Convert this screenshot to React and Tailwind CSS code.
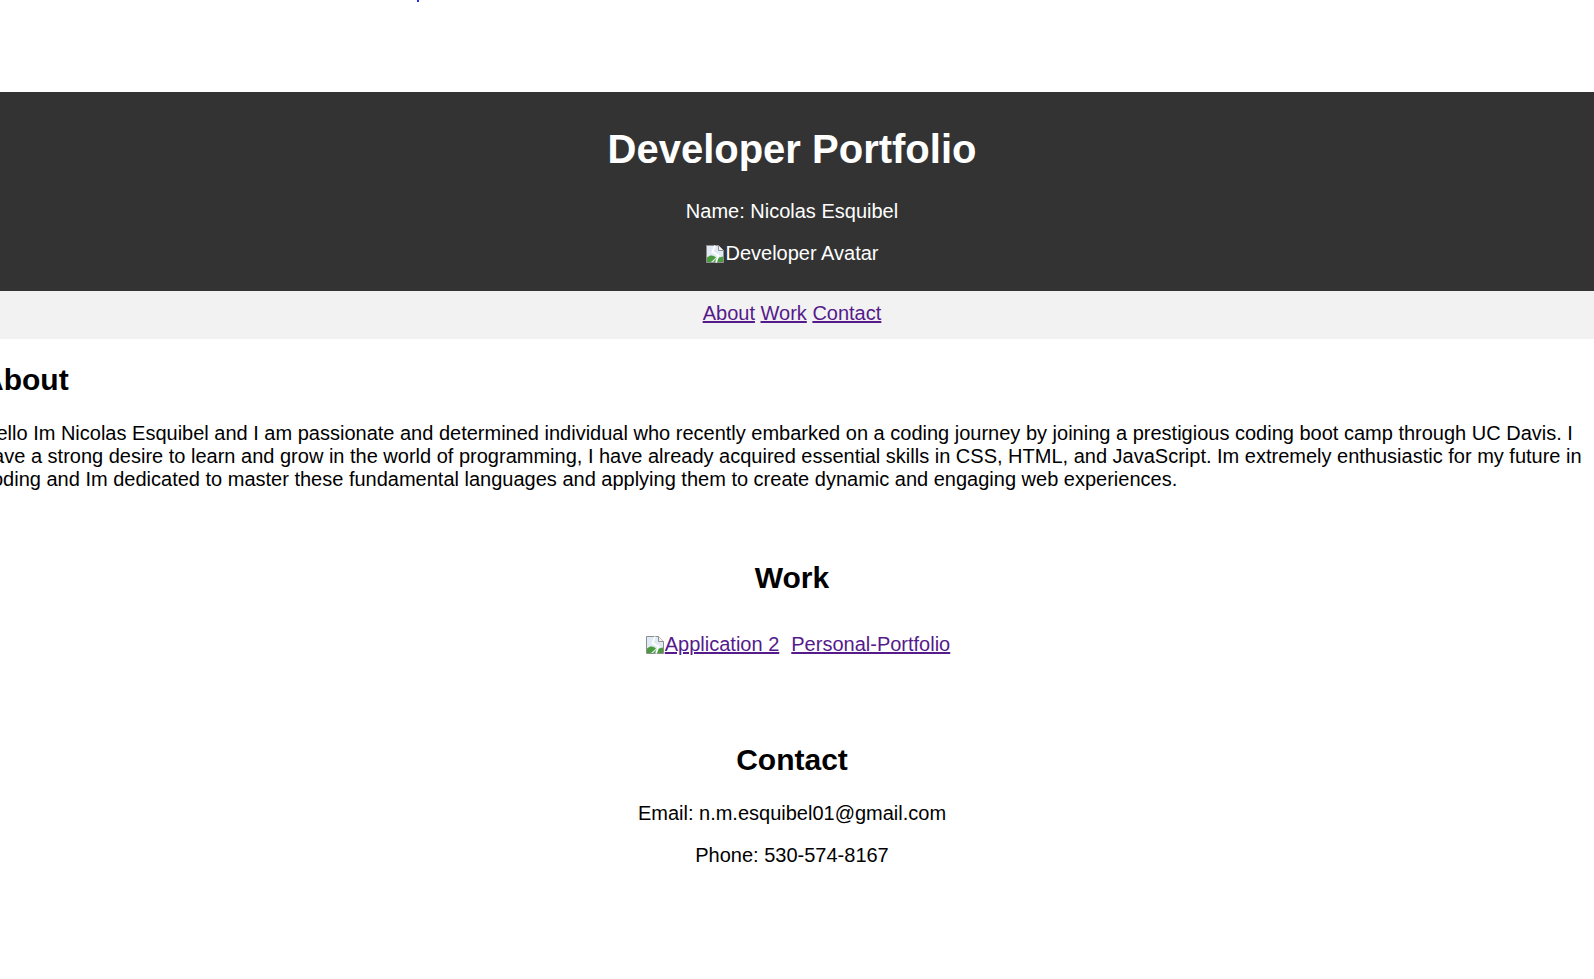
import React from "react";

function BrokenImg() {
  return (
    <svg width="20" height="20" viewBox="0 0 20 20" className="inline-block shrink-0">
      <path d="M1.5 1.5H13.5L18.5 6.5V18.5H1.5Z" fill="#dfeaf5" stroke="#8e8e8e" />
      <path d="M13.5 1.5V6.5H18.5" fill="#f4f4f4" stroke="#8e8e8e" />
      <path d="M2 18V13.5C5 10.5 8.5 11 11 13.5L6 18Z" fill="#4a9b3c" />
      <path d="M8 18L12 14L18 12.5V18Z" fill="#4a9b3c" />
      <path d="M10 1.5L7.5 8L13.5 11.5L11 18.5" fill="none" stroke="#ffffff" strokeWidth="1.8" />
    </svg>
  );
}

export default function App() {
  return (
    <div className="font-['Liberation_Sans',Arial,sans-serif] text-[20px] leading-[normal] text-black bg-white min-h-[979px] overflow-hidden">
      <div className="h-[92px]">
        <div className="ml-[417px] w-[2px] h-[2px] bg-[#2b2bff]" />
      </div>
      <header className="bg-[#333333] text-white text-center h-[199px] pt-[34px]">
        <div className="w-[1584px]">
          <h1 className="text-[40px] font-bold leading-[46px]">Developer Portfolio</h1>
          <p className="mt-[28px]">Name: Nicolas Esquibel</p>
          <p className="mt-[19px] inline-flex items-center">
            <BrokenImg />
            <span>Developer Avatar</span>
          </p>
        </div>
      </header>
      <nav className="bg-[#f2f2f2] h-[48px] pt-[11px]">
        <div className="w-[1584px] text-center">
          <a href="#about" className="text-[#551a8b] underline">About</a>{" "}
          <a href="#work" className="text-[#551a8b] underline">Work</a>{" "}
          <a href="#contact" className="text-[#551a8b] underline">Contact</a>
        </div>
      </nav>
      <section className="mt-[24px]">
        <h2 className="text-[30px] font-bold ml-[-18px]">About</h2>
        <p className="mt-[25px] ml-[-18px] w-[1610px]">
          Hello Im Nicolas Esquibel and I am passionate and determined individual who recently embarked on a coding journey by joining a prestigious coding boot camp through UC Davis. I have a strong desire to learn and grow in the world of programming, I have already acquired essential skills in CSS, HTML, and JavaScript. Im extremely enthusiastic for my future in coding and Im dedicated to master these fundamental languages and applying them to create dynamic and engaging web experiences.
        </p>
      </section>
      <section className="w-[1584px] text-center mt-[70px]">
        <h2 className="text-[30px] font-bold">Work</h2>
        <div className="mt-[38px] flex justify-center items-center gap-[12px] pl-[11px] text-[20px]">
          <a href="#" className="text-[#551a8b] underline inline-flex items-center">
            <BrokenImg />
            <span>Application 2</span>
          </a>
          <a href="#" className="text-[#551a8b] underline">Personal-Portfolio</a>
        </div>
      </section>
      <section className="w-[1584px] text-center mt-[87px]">
        <h2 className="text-[30px] font-bold">Contact</h2>
        <p className="mt-[25px]">Email: n.m.esquibel01@gmail.com</p>
        <p className="mt-[19px]">Phone: 530-574-8167</p>
      </section>
    </div>
  );
}
